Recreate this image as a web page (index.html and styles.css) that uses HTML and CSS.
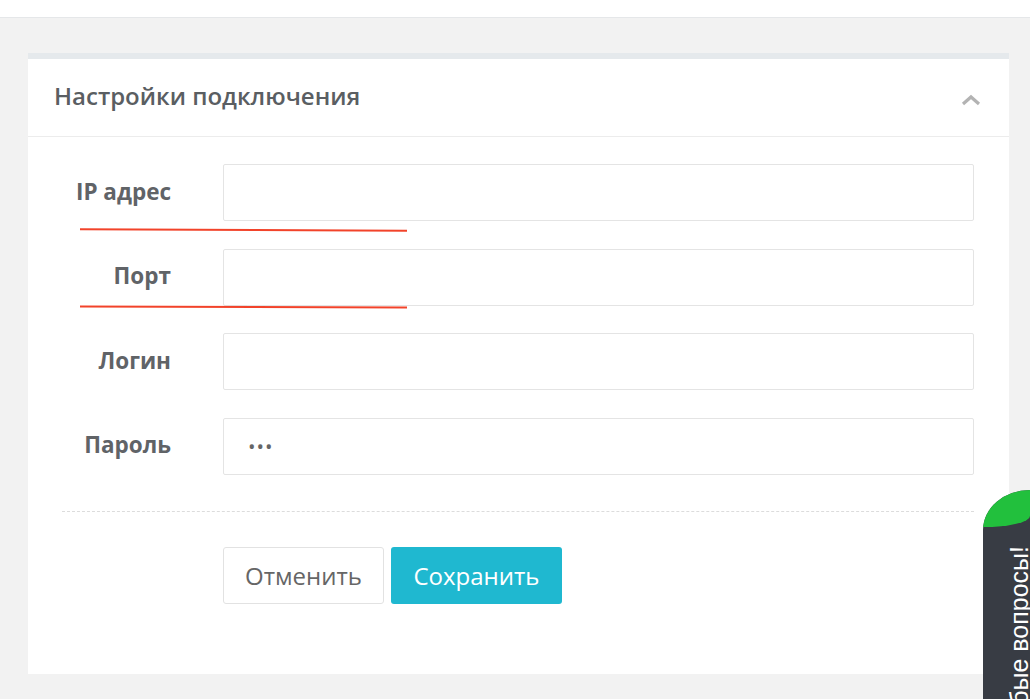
FILE: index.html
```html
<!DOCTYPE html>
<html lang="ru">
<head>
    <meta charset="UTF-8">
    <meta name="viewport" content="width=device-width, initial-scale=1.0">
    <title>Настройки подключения</title>
    <link rel="stylesheet" href="styles.css">
</head>
<body>
    <div class="topbar"></div>

    <div class="page">
        <div class="card">
            <div class="card-head">
                <h2>Настройки подключения</h2>
                <svg class="chevron" width="20" height="12" viewBox="0 0 20 12">
                    <path d="M2 10 L10 3 L18 10" fill="none" stroke="#b3b3b3" stroke-width="3.2"/>
                </svg>
            </div>

            <div class="card-body">
                <!-- поля подключения -->
                <div class="form-row">
                    <label for="ip">IP адрес</label>
                    <input type="text" id="ip">
                    <span class="mark mark-ip"></span>
                </div>
                <div class="form-row">
                    <label for="port">Порт</label>
                    <input type="text" id="port">
                    <span class="mark mark-port"></span>
                </div>
                <div class="form-row">
                    <label for="login">Логин</label>
                    <input type="text" id="login">
                </div>
                <div class="form-row">
                    <label for="password">Пароль</label>
                    <input type="password" id="password" value="123">
                </div>

                <div class="divider"></div>

                <div class="actions">
                    <button class="btn btn-cancel">Отменить</button>
                    <button class="btn btn-save">Сохранить</button>
                </div>
            </div>
        </div>
    </div>

    <div class="feedback">
        <span>Задайте любые вопросы!</span>
    </div>
</body>
</html>
```

FILE: styles.css
```css
html, body {
    height: 100%;
}
body {
    margin: 0;
    background-color: #f2f2f2;
    font-family: "Open Sans", "Noto Sans", sans-serif;
    color: #666;
    overflow: hidden;
}
.topbar {
    height: 17px;
    background-color: #fff;
    border-bottom: 1px solid #e5e7e9;
}
.page {
    padding: 35px 21px 0 28px;
}
.card {
    background-color: #fff;
    border-top: 6px solid #e5e9ec;
}
.card-head {
    height: 77px;
    display: flex;
    align-items: center;
    justify-content: space-between;
    padding: 0 28px 0 26px;
    border-bottom: 1px solid #ececec;
}
.card-head h2 {
    margin: 0 0 4px;
    font-size: 24px;
    font-weight: 600;
    color: #5a5e62;
}
.chevron {
    margin-top: 4px;
}
.card-body {
    padding: 27px 35px 70px 0;
}
.form-row {
    position: relative;
    display: flex;
    align-items: center;
    height: 57px;
    margin-bottom: 27.5px;
}
.form-row:last-of-type {
    margin-bottom: 0;
}
.form-row label {
    width: 195px;
    padding-right: 52px;
    box-sizing: border-box;
    text-align: right;
    font-size: 22.5px;
    font-weight: 700;
    color: #606367;
    margin-bottom: 3px;
}
.form-row input {
    flex: 1;
    height: 57px;
    padding: 0 24px;
    border: 1.5px solid #e4e4e4;
    border-radius: 2px;
    box-sizing: border-box;
    font-family: inherit;
    font-size: 20px;
    color: #666;
    outline: none;
}
.form-row input[type="password"] {
    letter-spacing: 1px;
}
/* красные пометки поверх формы */
.mark {
    position: absolute;
    left: 52px;
    width: 327px;
    height: 2px;
    background-color: #f2432a;
    transform: rotate(0.3deg);
}
.mark-ip {
    top: 65px;
}
.mark-port {
    top: 57px;
    transform: rotate(0.15deg);
}
.divider {
    margin: 36px 0 35px 34px;
    border-top: 1px dashed #dcdcdc;
}
.actions {
    display: flex;
    gap: 7px;
    padding-left: 195px;
}
.btn {
    height: 57px;
    border-radius: 3px;
    font-family: inherit;
    font-size: 24px;
    cursor: pointer;
    padding: 0;
}
.btn-cancel {
    width: 161px;
    background-color: #fff;
    border: 1.5px solid #e2e2e2;
    color: #666;
}
.btn-save {
    width: 171px;
    background-color: #1fb8d0;
    border: none;
    color: #fff;
}
.feedback {
    position: fixed;
    left: 983px;
    top: 490px;
    width: 47px;
    height: 300px;
    background-color: #383c44;
    border-top-left-radius: 47px 40px;
    overflow: hidden;
}
.feedback::before {
    content: "";
    position: absolute;
    top: 0;
    left: 0;
    width: 100%;
    height: 37px;
    background-color: #22c03d;
    border-bottom-right-radius: 100% 30%;
}
.feedback span {
    position: absolute;
    top: 56px;
    left: 22px;
    writing-mode: vertical-rl;
    transform: rotate(180deg);
    font-family: "Liberation Sans", Arial, sans-serif;
    font-size: 25px;
    color: #fff;
    white-space: nowrap;
}
```
